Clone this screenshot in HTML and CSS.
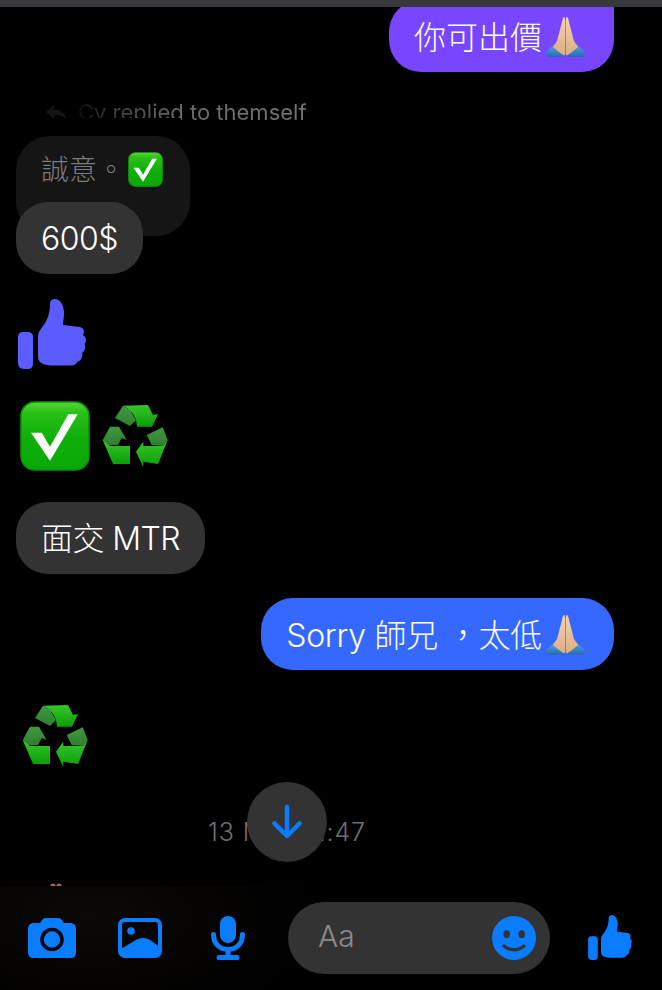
FILE: index.html
```html
<!DOCTYPE html>
<html lang="zh-Hant">
<head>
<meta charset="utf-8">
<title>Chat</title>
<link rel="stylesheet" href="styles.css">
</head>
<body>
<svg class="defs" aria-hidden="true">
  <defs>
    <linearGradient id="gBox" x1="0" y1="0" x2="0" y2="1">
      <stop offset="0" stop-color="#58d83a"/><stop offset=".16" stop-color="#27c015"/><stop offset=".55" stop-color="#10ae0a"/><stop offset="1" stop-color="#0aa806"/>
    </linearGradient>
    <linearGradient id="gBright" x1="0" y1="0" x2="0" y2="1">
      <stop offset="0" stop-color="#35c828"/><stop offset="1" stop-color="#0d9c0b"/>
    </linearGradient>
    <linearGradient id="gDark" x1="0" y1="0" x2="0" y2="1">
      <stop offset="0" stop-color="#3f9a3f"/><stop offset="1" stop-color="#2f7f30"/>
    </linearGradient>
    <linearGradient id="gSkin" x1="0" y1="0" x2="0" y2="1">
      <stop offset="0" stop-color="#f3d3ad"/><stop offset="1" stop-color="#dcae84"/>
    </linearGradient>
    <linearGradient id="gSleeve" x1="0" y1="0" x2="0" y2="1">
      <stop offset="0" stop-color="#5fa6e4"/><stop offset="1" stop-color="#2a68b8"/>
    </linearGradient>
    <symbol id="thumb" viewBox="0 0 68 70">
      <path d="M0 38C0 35 2 33 5 33H10C13 33 15 35 15 38V64C15 68 13 70 10 70H6C2 70 0 67 0 64Z"/>
      <path d="M32 5C32 1 35 0 37 0C42 0 46 6 46 14C46 19 45 23 45 26L62 28C66 29 67 33 65 36C68 38 69 42 66.500 45C68 48 67 52 64 54C65 58 63 62 59 63C58 66 55 66.500 50 66.500H38C28 66.500 20 65 20 58V38C20 32 24 29 27 24C30 19 32 13 32 5Z"/>
    </symbol>
    <symbol id="check" viewBox="0 0 70 70">
      <rect x="1" y="1" width="68" height="68" rx="14" fill="url(#gBox)" stroke="#0c9208" stroke-width="1.500"/>
      <path d="M11 31.700H21.700L30 45.700L48.300 13.300H57.700L30 59.700Z" fill="#fff"/>
    </symbol>
    <symbol id="recycle" viewBox="0 0 66 63">
      <path d="M13 13L21 .7L28 5L34 15L28 21Z" fill="url(#gDark)"/>
      <path d="M21 .7L46 0L51 10L56 9L50 21.700H35L34 15C32 9 28 4 21 .7Z" fill="url(#gBright)"/>
      <path d="M.7 35L8 21.700H17L24.700 35L19.700 33L16 40L5 40Z" fill="url(#gDark)"/>
      <path d="M.7 35L8 41H28V59H11Z" fill="url(#gBright)"/>
      <path d="M44.700 30L60.700 22.300L65.700 35L61 41L49.700 40Z" fill="url(#gDark)"/>
      <path d="M65.700 35L56 59L41.300 56.700V62.300L34 46.700L41.300 36.700V41H61Z" fill="url(#gBright)"/>
    </symbol>
    <symbol id="pray" viewBox="0 0 41 40">
      <path d="M1 35L10 27L17 33L19 40H2Z" fill="url(#gSleeve)"/>
      <path d="M40 35L31 27L24 33L22 40H39Z" fill="url(#gSleeve)"/>
      <path d="M19.500 0C18 0 17.500 2 17 5L12 24L8 30L14 35L19 38.500L20.200 37V3Z" fill="url(#gSkin)"/>
      <path d="M21.500 0C23 0 23.500 2 24 5L29 24L33 30L27 35L22 38.500L20.800 37V3Z" fill="url(#gSkin)"/>
    </symbol>
  </defs>
</svg>

<main class="screen">
  <div class="topbar"></div>

  <section class="thread">
    <div class="bubble outgoing purple first">
      <span>你可出價</span>
      <svg class="emoji-pray"><use href="#pray"/></svg>
    </div>

    <div class="reply-label">
      <svg class="reply-icon" viewBox="0 0 22 16"><path d="M9 1L1 8L9 15V10.500C14 10.500 18 12 21 15C20 9 16 5.500 9 5.500Z"/></svg>
      <span class="reply-text">Cy replied to themself</span>
    </div>

    <div class="quote">
      <span>誠意。</span>
      <svg class="emoji-check-small"><use href="#check"/></svg>
    </div>
    <div class="bubble incoming overlap">600$</div>

    <svg class="thumb-large"><use href="#thumb"/></svg>

    <div class="emoji-row">
      <svg class="emoji-check"><use href="#check"/></svg>
      <svg class="emoji-recycle"><use href="#recycle"/></svg>
    </div>

    <div class="bubble incoming meet">面交 MTR</div>

    <div class="bubble outgoing blue sorry">
      <span>Sorry 師兄 ，太低</span>
      <svg class="emoji-pray"><use href="#pray"/></svg>
    </div>

    <svg class="emoji-recycle solo"><use href="#recycle"/></svg>

    <div class="time-row">
      <span>13 Mar, 11:47</span>
      <button class="scroll-down" aria-label="Scroll down">
        <svg viewBox="0 0 30 34"><path d="M15 2V31M2.500 18.500L15 31L27.500 18.500" /></svg>
      </button>
    </div>

    <svg class="peek" viewBox="0 0 12 4"><ellipse cx="3" cy="4" rx="2.800" ry="3.500"/><ellipse cx="9" cy="4" rx="2.800" ry="3.500"/></svg>
  </section>

  <footer class="composer">
    <svg class="icon-camera" viewBox="0 0 48 40">
      <path class="blue-fill" d="M6 5H12L14 2C15 .7 16 0 18 0H30C32 0 33 .7 34 2L36 5H42C46 5 48 7.500 48 11V34C48 38 46 40 42 40H6C2 40 0 38 0 34V11C0 7.500 2 5 6 5Z"/>
      <circle cx="24" cy="21.500" r="10" fill="none" stroke="#050505" stroke-width="3.600"/>
    </svg>
    <svg class="icon-gallery" viewBox="0 0 44 40">
      <rect class="blue-fill" width="44" height="40" rx="7"/>
      <path d="M4 7C4 5 5 4 7 4H37C39 4 40 5 40 7V28C35 24 31 20 25 20C18 20 11 27 4 30Z" fill="#050505"/>
      <circle class="blue-fill" cx="13" cy="13" r="3.800"/>
    </svg>
    <svg class="icon-mic" viewBox="0 0 34 44">
      <rect class="blue-fill" x="9" y="0" width="16" height="27" rx="8"/>
      <path class="blue-line" d="M2.500 18.500C2.500 28 9 33.500 17 33.500C25 33.500 31.500 28 31.500 18.500M17 33.500V41M8 41.500H26"/>
    </svg>
    <div class="input-pill">
      <span class="placeholder">Aa</span>
      <svg class="icon-smile" viewBox="0 0 44 44">
        <circle class="blue-fill" cx="22" cy="22" r="22"/>
        <ellipse cx="14.700" cy="18.300" rx="3.300" ry="4" fill="#333"/>
        <ellipse cx="29.700" cy="18.300" rx="3.300" ry="4" fill="#333"/>
        <path d="M12 30C18 35 26 35 32 30" fill="none" stroke="#333" stroke-width="3.400" stroke-linecap="round"/>
      </svg>
    </div>
    <svg class="thumb-small"><use href="#thumb"/></svg>
  </footer>
</main>
</body>
</html>
```

FILE: styles.css
```css
* { box-sizing: border-box; }

html, body {
  margin: 0;
  background: #000;
}

.defs {
  position: absolute;
  width: 0;
  height: 0;
}

.screen {
  width: 662px;
  height: 990px;
  display: flex;
  flex-direction: column;
  overflow: hidden;
  background: #000;
  font-family: Inter, "Noto Sans CJK TC", sans-serif;
  color: #fff;
}

.topbar {
  height: 7px;
  flex: none;
  background: #38383a;
}

.thread {
  flex: 1;
  min-height: 0;
  overflow: hidden;
  display: flex;
  flex-direction: column;
  align-items: flex-start;
  padding: 0 48px 0 16px;
}

.bubble {
  height: 72px;
  flex: none;
  display: flex;
  align-items: center;
  border-radius: 32px;
  font-size: 32px;
  font-weight: 300;
  line-height: 40px;
  white-space: pre;
}

.outgoing {
  align-self: flex-end;
  padding: 0 28px 0 25px;
}

.outgoing > span {
  padding-top: 3px;
}

.incoming {
  background: #333;
  padding: 2px 25px 0;
}

.purple {
  background: #7846ff;
}

.blue {
  background: #3568ff;
}

.first {
  margin-top: -7px;
  border-top-right-radius: 8px;
}

.emoji-pray {
  width: 41px;
  height: 40px;
  margin: 2px 0 0 3px;
  flex: none;
}

.reply-label {
  position: relative;
  margin: 28px 0 0 29px;
  height: 24px;
  display: flex;
  align-items: center;
  gap: 11px;
  font-size: 22px;
  line-height: 24px;
}

.reply-icon {
  width: 22px;
  height: 16px;
  fill: #141414;
}

.reply-text {
  color: transparent;
  background: linear-gradient(90deg, #0c0c0c 0, #3a3a3a 15%, #6a6a6a 45%, #737373 100%);
  -webkit-background-clip: text;
  background-clip: text;
}

.reply-label::after {
  content: "";
  position: absolute;
  left: 0;
  top: 18px;
  width: 136px;
  height: 8px;
  background: #000;
}

.quote {
  margin-top: 12px;
  width: 174px;
  height: 100px;
  flex: none;
  display: flex;
  align-items: flex-start;
  padding: 16px 0 0 25px;
  border-radius: 34px;
  background: #151515;
  color: #7c7c7c;
  font-size: 28px;
  font-weight: 300;
  line-height: 36px;
}

.emoji-check-small {
  width: 35px;
  height: 35px;
  margin-left: 3px;
  flex: none;
}

.overlap {
  margin-top: -34px;
  position: relative;
  letter-spacing: -.5px;
}

.thumb-large {
  width: 68px;
  height: 70px;
  margin: 25px 0 0 2px;
  flex: none;
  fill: #5a5cff;
}

.emoji-row {
  margin: 32px 0 0 4px;
  display: flex;
  align-items: center;
  gap: 12px;
}

.emoji-check {
  width: 70px;
  height: 70px;
  flex: none;
}

.emoji-recycle {
  width: 66px;
  height: 63px;
  flex: none;
}

.emoji-recycle.solo {
  margin: 35px 0 0 6px;
}

.meet {
  margin-top: 31px;
  letter-spacing: -.6px;
}

.sorry {
  margin-top: 24px;
  letter-spacing: -.25px;
}

.time-row {
  position: relative;
  align-self: stretch;
  margin: 52px 56px 0 0;
  height: 24px;
  flex: none;
  text-align: center;
  font-size: 25px;
  font-weight: 300;
  letter-spacing: .9px;
  line-height: 24px;
  color: #707070;
}

.scroll-down {
  position: absolute;
  left: 50%;
  top: -38px;
  width: 80px;
  height: 80px;
  margin-left: -40px;
  padding: 0;
  border: 0;
  border-radius: 50%;
  background: #333;
  display: flex;
  align-items: center;
  justify-content: center;
}

.scroll-down svg {
  width: 30px;
  height: 34px;
  fill: none;
  stroke: #0a7cff;
  stroke-width: 4.500;
  stroke-linecap: round;
  stroke-linejoin: round;
}

.peek {
  width: 12px;
  height: 4px;
  margin: 39px 0 0 34px;
  flex: none;
  fill: #a9683a;
}

.composer {
  height: 104px;
  flex: none;
  display: flex;
  align-items: center;
  padding: 0 29px 0 28px;
  background: radial-gradient(ellipse 220px 110px at 90px 30px, #0c0805 0, #050403 60%, #000 100%);
}

.blue-fill {
  fill: #0a7cff;
}

.blue-line {
  fill: none;
  stroke: #0a7cff;
  stroke-width: 5;
  stroke-linecap: round;
}

.icon-camera {
  width: 48px;
  height: 40px;
  flex: none;
}

.icon-gallery {
  width: 44px;
  height: 40px;
  flex: none;
  margin-left: 42px;
}

.icon-mic {
  width: 34px;
  height: 44px;
  flex: none;
  margin-left: 49px;
}

.input-pill {
  width: 262px;
  height: 72px;
  flex: none;
  margin-left: 43px;
  display: flex;
  align-items: center;
  justify-content: space-between;
  padding: 0 14px 0 30px;
  border-radius: 36px;
  background: #333;
}

.placeholder {
  margin-top: -4px;
  font-size: 30px;
  font-weight: 300;
  line-height: 36px;
  color: #8a8a8a;
}

.icon-smile {
  width: 44px;
  height: 44px;
  flex: none;
}

.thumb-small {
  width: 44px;
  height: 45px;
  flex: none;
  margin: -2px 0 0 38px;
  fill: #0a7cff;
}
```
